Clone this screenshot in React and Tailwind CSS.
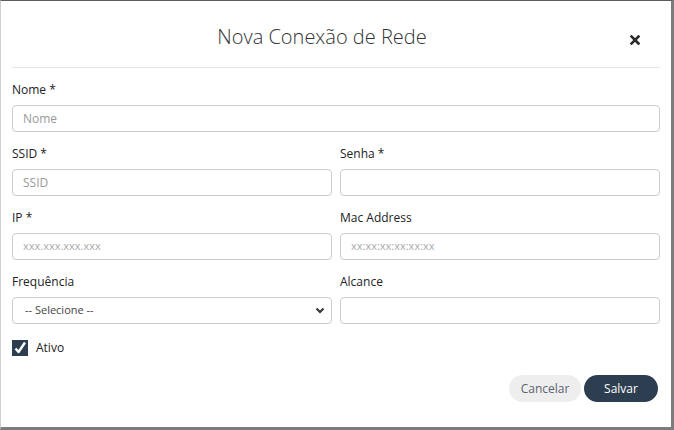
import React from "react";

const font = { fontFamily: '"Open Sans", "Noto Sans", sans-serif' };

function Label({ children }) {
  return (
    <div className="text-[12px] leading-[16px] font-medium text-[#222] mb-[7px]">{children}</div>
  );
}

function Input({ placeholder, mono }) {
  return (
    <div className="h-[27px] border border-[#ccc] rounded-[4px] bg-white flex items-center px-[10px]">
      {placeholder ? (
        <span className={mono ? "text-[11px] text-[#aaa]" : "text-[12px] text-[#999]"}>{placeholder}</span>
      ) : null}
    </div>
  );
}

function Field({ label, placeholder, mono }) {
  return (
    <div className="mb-[14px]">
      <Label>{label}</Label>
      <Input placeholder={placeholder} mono={mono} />
    </div>
  );
}

export default function App() {
  return (
    <div className="w-[674px] h-[430px] bg-white border-t border-t-[#5c5c5c] border-l border-l-[#cfcfcf] border-r-[3px] border-r-[#7c7c7c] border-b-[3px] border-b-[#7c7c7c] flex flex-col" style={font}>
      <div className="h-[67px] flex items-center justify-center relative mx-[11px] border-b border-[#e5e5e5]">
        <div className="text-[20px] font-light text-[#333] mt-[5px] mr-[28px]">Nova Conexão de Rede</div>
        <div className="absolute right-[20px] top-[34px] text-[#333]">
          <svg width="10" height="10" viewBox="0 0 10 10">
            <path d="M1.5 1.5 L8.5 8.5 M8.5 1.5 L1.5 8.5" stroke="#2b2b2b" strokeWidth="2.6" strokeLinecap="square" />
          </svg>
        </div>
      </div>
      <div className="px-[11px] pt-[14px]">
        <Field label="Nome *" placeholder="Nome" />
        <div className="grid grid-cols-2 gap-x-[8px]">
          <Field label="SSID *" placeholder="SSID" />
          <Field label="Senha *" />
          <Field label="IP *" placeholder="xxx.xxx.xxx.xxx" mono />
          <Field label="Mac Address" placeholder="xx:xx:xx:xx:xx:xx" mono />
          <div className="mb-[14px]">
            <Label>Frequência</Label>
            <div className="h-[27px] border border-[#ccc] rounded-[4px] bg-white flex items-center justify-between pl-[12px] pr-[6px]">
              <span className="text-[11px] text-[#444]">-- Selecione --</span>
              <svg width="10" height="7" viewBox="0 0 10 7">
                <path d="M1.5 1.5 L5 5 L8.5 1.5" fill="none" stroke="#333" strokeWidth="2" />
              </svg>
            </div>
          </div>
          <div className="mb-[14px]">
            <Label>Alcance</Label>
            <Input />
          </div>
        </div>
        <div className="flex items-center gap-[8px] mt-[1px]">
          <div className="w-[16px] h-[16px] bg-[#2c3e50] flex items-center justify-center">
            <svg width="14" height="14" viewBox="0 0 14 14">
              <path d="M2.5 7.5 L5.5 11 L12 1.5" fill="none" stroke="#fff" strokeWidth="2.4" strokeLinejoin="round" />
            </svg>
          </div>
          <span className="text-[12px] font-medium text-[#222]">Ativo</span>
        </div>
        <div className="flex justify-end gap-[3px] mt-[18px] pr-[2px]">
          <button className="h-[27px] w-[72px] rounded-full bg-[#eeeeee] text-[12px] text-[#5a6470]">Cancelar</button>
          <button className="h-[27px] w-[74px] rounded-full bg-[#2c3e50] text-[12px] font-medium text-white">Salvar</button>
        </div>
      </div>
    </div>
  );
}
